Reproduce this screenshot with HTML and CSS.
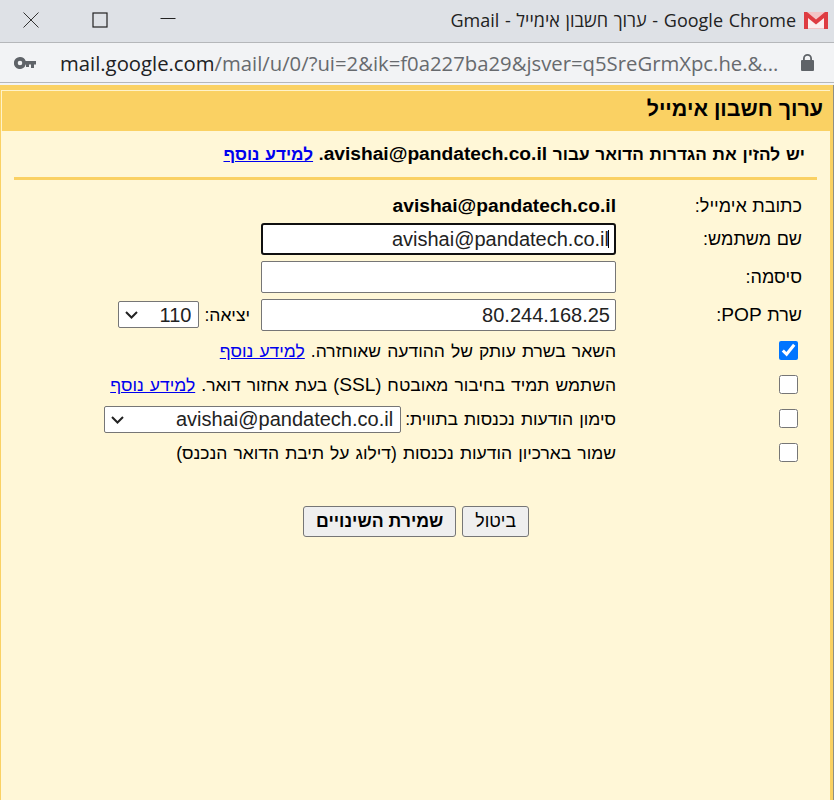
FILE: index.html
```html
<!DOCTYPE html>
<html lang="he">
<head>
<meta charset="utf-8">
<title>ערוך חשבון אימייל</title>
<link rel="stylesheet" href="styles.css">
</head>
<body>
<header class="titlebar">
  <div class="win-controls">
    <svg class="win-icon" width="18" height="18" viewBox="0 0 18 18"><path d="M1.500 1.500L16.500 16.500M16.500 1.500L1.500 16.500" stroke="#333" stroke-width="1" fill="none"/></svg>
    <svg class="win-icon" width="16" height="16" viewBox="0 0 16 16"><rect x="1" y="1" width="14" height="14" stroke="#222" stroke-width="1.200" fill="none"/></svg>
    <svg class="win-icon" width="16" height="16" viewBox="0 0 16 16"><path d="M0.500 6.500H15.500" stroke="#222" stroke-width="1" fill="none"/></svg>
  </div>
  <div class="win-title">
    <span class="win-text" dir="ltr">Gmail - ערוך חשבון אימייל - Google Chrome</span>
    <svg width="24" height="17" viewBox="0 0 24 17"><rect width="24" height="17" fill="#f3c4c6"/><path d="M3 16V3L12 10L21 3V16Z" fill="#fbeeee"/><path d="M0 17V0H3L12 7.500L21 0H24V17H20V6L12 12.500L4 6V17Z" fill="#de3c42"/></svg>
  </div>
</header>
<div class="urlbar">
  <svg class="key" width="22" height="12" viewBox="0 0 22 12"><path fill-rule="evenodd" d="M6 0a6 6 0 0 1 5.700 4H22v3.500h-2V11h-3V7.500h-2V10h-3V7.500h-.3A6 6 0 1 1 6 0ZM6 3.700a2.300 2.300 0 1 0 0 4.600 2.300 2.300 0 0 0 0-4.600Z" fill="#5f6368"/></svg>
  <div class="url"><span class="host">mail.google.com</span>/mail/u/0/?ui=2&amp;ik=f0a227ba29&amp;jsver=q5SreGrmXpc.he.&amp;...</div>
  <svg class="lock" width="13" height="17" viewBox="0 0 13 17"><path fill-rule="evenodd" d="M2 6V4.500a4.500 4.500 0 0 1 9 0V6h1a1 1 0 0 1 1 1v9a1 1 0 0 1-1 1H1a1 1 0 0 1-1-1V7a1 1 0 0 1 1-1ZM3.800 6h5.400V4.500a2.700 2.700 0 0 0-5.400 0Z" fill="#5f6368"/></svg>
</div>
<main class="page" dir="rtl">
  <h1 class="heading">ערוך חשבון אימייל</h1>
  <div class="content">
    <p class="intro">יש להזין את הגדרות הדואר עבור <span class="latin" dir="ltr">avishai@pandatech.co.il</span>. <a href="#">למידע נוסף</a></p>
    <form class="form">
      <div class="label row-email">כתובת אימייל:</div>
      <div class="value email"><span dir="ltr">avishai@pandatech.co.il</span></div>

      <label class="label">שם משתמש:</label>
      <div class="value"><span class="caret-wrap"><input class="field focus" type="text" value="avishai@pandatech.co.il" dir="rtl"><span class="caret"></span></span></div>

      <label class="label">סיסמה:</label>
      <div class="value"><input class="field" type="password" dir="rtl"></div>

      <label class="label row-pop">שרת <span class="latin">POP</span>:</label>
      <div class="value pop">
        <input class="field" type="text" value="80.244.168.25" dir="rtl">
        <span class="port-label">יציאה:</span>
        <span class="select-wrap">
          <select class="select port"><option>110</option></select>
          <svg class="chevron" width="13" height="8" viewBox="0 0 13 8"><path d="M1 1L6.500 6.500L12 1" stroke="#222" stroke-width="2" fill="none"/></svg>
        </span>
      </div>

      <div class="check"><input type="checkbox" checked></div>
      <div class="text">השאר בשרת עותק של ההודעה שאוחזרה. <a href="#">למידע נוסף</a></div>

      <div class="check"><input type="checkbox"></div>
      <div class="text">השתמש תמיד בחיבור מאובטח (<span class="latin">SSL</span>) בעת אחזור דואר. <a href="#">למידע נוסף</a></div>

      <div class="check"><input type="checkbox"></div>
      <div class="text">סימון הודעות נכנסות בתווית:
        <span class="select-wrap raised">
          <select class="select tag"><option>avishai@pandatech.co.il</option></select>
          <svg class="chevron" width="13" height="8" viewBox="0 0 13 8"><path d="M1 1L6.500 6.500L12 1" stroke="#222" stroke-width="2" fill="none"/></svg>
        </span>
      </div>

      <div class="check"><input type="checkbox"></div>
      <div class="text">שמור בארכיון הודעות נכנסות (דילוג על תיבת הדואר הנכנס)</div>
    </form>
    <div class="actions">
      <button class="btn" type="button">ביטול</button>
      <button class="btn primary" type="button">שמירת השינויים</button>
    </div>
  </div>
</main>
</body>
</html>
```

FILE: styles.css
```css
* { box-sizing: border-box; }
html, body { margin: 0; height: 100%; }
body {
  display: flex;
  flex-direction: column;
  height: 800px;
  overflow: hidden;
  background: #f2f3f5;
  font-family: "Liberation Sans", Arial, sans-serif;
  font-size: 18px;
  color: #000;
}
.titlebar {
  height: 43px;
  flex: none;
  background: #dee1e6;
  border-bottom: 1px solid #b5b7ba;
  display: flex;
  align-items: center;
  justify-content: space-between;
  padding: 0 6px 2px 22px;
}
.win-controls { display: flex; align-items: center; gap: 52px; }
.win-title { display: flex; align-items: center; gap: 8px; }
.win-text { font-family: "Open Sans", "Noto Sans", sans-serif; font-size: 18px; word-spacing: 1px; color: #222; }
.urlbar {
  height: 40px;
  flex: none;
  background: #f2f3f5;
  border-bottom: 1px solid #b5b7ba;
  display: flex;
  align-items: center;
  padding: 0 20px 0 14px;
}
.key { flex: none; }
.url {
  flex: 1;
  margin-left: 24px;
  font-family: "Open Sans", "Noto Sans", sans-serif;
  font-size: 20.300px;
  color: #676a6e;
  white-space: nowrap;
  overflow: hidden;
}
.host { color: #202124; }
.lock { flex: none; }
.page {
  flex: 1;
  margin-top: 2px;
  margin-right: 1px;
  background: #fff7d7;
  border: solid #fad163;
  border-width: 5px 3px 0 1px;
  display: flex;
  flex-direction: column;
  box-shadow: 1px 0 0 #8f8f85;
}
.heading {
  margin: 0;
  height: 41px;
  background: #fad163;
  border-top: 1px solid #fff3c9;
  border-left: 1px solid #fff3c9;
  padding: 0 7px;
  font-size: 21.400px;
  font-weight: bold;
  line-height: 37px;
}
.content { padding: 0 28px 0 0; }
.latin { font-size: 19.200px; }
.intro {
  margin: 0 -15px 0 13px;
  height: 49px;
  padding: 12px 12px 0 0;
  border-bottom: 3px solid #fad163;
  font-size: 17.200px;
  word-spacing: 1px;
  font-weight: bold;
  line-height: 21px;
  white-space: nowrap;
}
a { color: #00e; text-decoration: underline; }
.form {
  display: grid;
  grid-template-columns: 186px 1fr;
  margin-top: 12px;
  align-items: center;
}
.label { height: 38px; line-height: 38px; word-spacing: 0.500px; }
.row-email { height: 28px; line-height: 28px; }
.value { height: 38px; display: flex; align-items: center; }
.email { height: 28px; line-height: 26px; font-weight: bold; font-size: 19.200px; }
.label.row-pop { height: 37px; line-height: 37px; }
.value.pop { height: 37px; align-items: flex-start; padding-top: 3px; }
.caret-wrap { position: relative; display: block; line-height: 0; }
.caret { position: absolute; right: 7px; top: 7px; width: 1px; height: 18px; background: #000; }
.field {
  width: 355px;
  height: 32px;
  padding: 0 5px;
  font: 20px "Liberation Sans", Arial, sans-serif;
  color: #222;
  background: #fff;
  border: 1px solid #767676;
  border-radius: 2px;
  outline: none;
  flex: none;
}
.field.focus { border: 2px solid #101010; border-radius: 3px; }
.port-label { margin: 0 11px 0 5px; font-size: 17.500px; line-height: 33px; }
.select-wrap { position: relative; display: inline-block; line-height: 0; vertical-align: middle; }
.pop .select-wrap { margin-top: 2px; }
.raised { margin: 0 -2px 2px 0; }
.select {
  appearance: none;
  height: 27px;
  padding: 0 7px;
  font: 20px "Liberation Sans", Arial, sans-serif;
  color: #222;
  background: #fff;
  border: 1px solid #767676;
  border-radius: 2px;
}
.chevron { position: absolute; left: 7px; top: 10px; }
.port { width: 81px; }
.tag { width: 297px; }
.check { height: 34px; display: flex; align-items: center; }
.check input { margin: 0 4px 0 0; width: 19px; height: 19px; accent-color: #0075ff; }
.text { height: 34px; line-height: 36px; white-space: nowrap; font-size: 17.500px; word-spacing: 1.200px; }
.actions { display: flex; gap: 6px; margin: 37px 273px 0 0; }
.btn {
  height: 31px;
  padding: 0 12px;
  font: 17.700px "Liberation Sans", Arial, sans-serif;
  color: #000;
  background: #efefef;
  border: 1px solid #767676;
  border-radius: 3px;
}
.primary { font-weight: bold; }
```
